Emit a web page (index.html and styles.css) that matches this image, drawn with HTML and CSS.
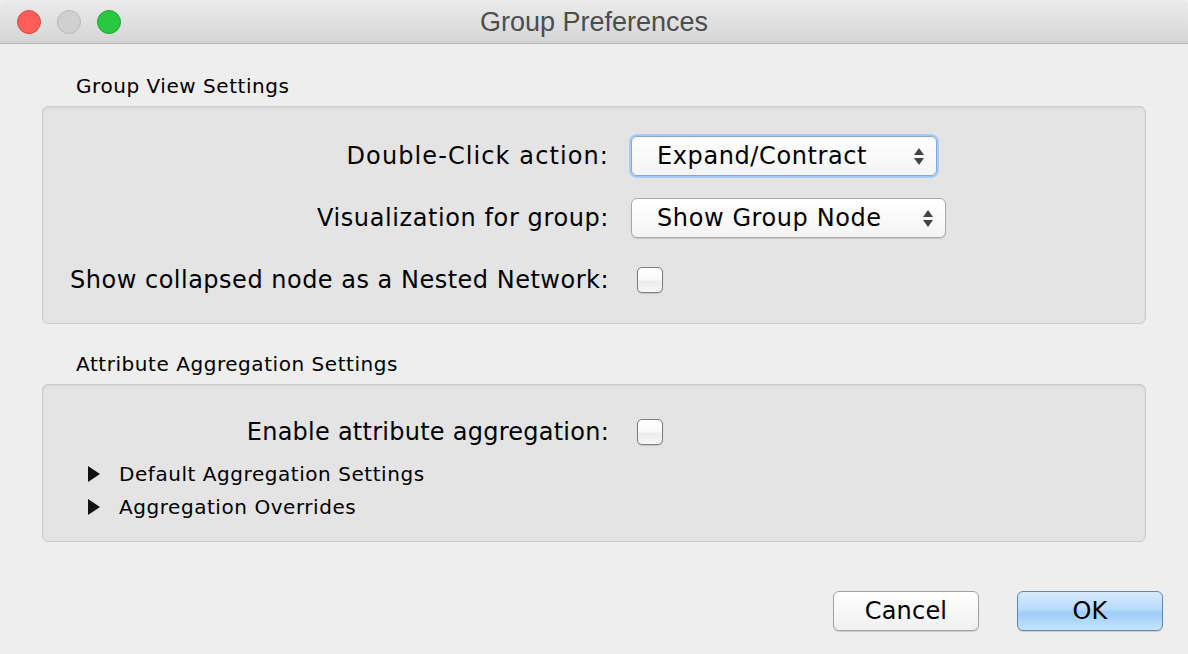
FILE: index.html
```html
<!DOCTYPE html>
<html>
<head>
<meta charset="utf-8">
<link rel="stylesheet" href="styles.css">
</head>
<body>
<div class="window">
  <div class="titlebar">
    <div class="lights">
      <span class="light red"></span>
      <span class="light grey"></span>
      <span class="light green"></span>
    </div>
    <div class="title">Group Preferences</div>
  </div>
  <div class="content">
    <div class="section-title first">Group View Settings</div>
    <div class="panel panel-view">
      <div class="form-grid">
        <div class="label wide">Double-Click action:</div>
        <div class="control">
          <div class="combo focused combo-a"><span>Expand/Contract</span><span class="arrows"><i class="up"></i><i class="down"></i></span></div>
        </div>
        <div class="label">Visualization for group:</div>
        <div class="control">
          <div class="combo combo-b"><span>Show Group Node</span><span class="arrows"><i class="up"></i><i class="down"></i></span></div>
        </div>
        <div class="label short snug">Show collapsed node as a Nested Network:</div>
        <div class="control short"><div class="check"></div></div>
      </div>
    </div>
    <div class="section-title">Attribute Aggregation Settings</div>
    <div class="panel panel-attr">
      <div class="form-grid">
        <div class="label tight">Enable attribute aggregation:</div>
        <div class="control"><div class="check"></div></div>
      </div>
      <div class="tree">
        <div class="tree-row"><span class="tri"></span><span>Default Aggregation Settings</span></div>
        <div class="tree-row"><span class="tri"></span><span>Aggregation Overrides</span></div>
      </div>
    </div>
    <div class="buttons">
      <div class="btn">Cancel</div>
      <div class="btn default">OK</div>
    </div>
  </div>
</div>
</body>
</html>
```
FILE: styles.css
```css
html, body {
  margin: 0;
  padding: 0;
  background: #eeeeee;
}
.window {
  width: 1188px;
  height: 654px;
  background: #eeeeee;
  font-family: "DejaVu Sans", "Open Sans", sans-serif;
  color: #000;
  overflow: hidden;
}
.titlebar {
  height: 43px;
  border-bottom: 1px solid #b3b3b3;
  background: linear-gradient(#ebebeb, #d5d5d5);
  display: flex;
  align-items: center;
  position: relative;
  border-radius: 8px 8px 0 0;
}
.lights {
  display: flex;
  gap: 16px;
  padding-left: 17px;
}
.light {
  width: 24px;
  height: 24px;
  border-radius: 50%;
  box-sizing: border-box;
}
.red { background: #fc5f57; border: 1px solid #df4840; }
.grey { background: #d0d0d0; border: 1px solid #bababa; }
.green { background: #28c840; border: 1px solid #1ea933; }
.title {
  position: absolute;
  left: 0;
  right: 0;
  top: 0;
  height: 43px;
  line-height: 44px;
  text-align: center;
  font-family: "Liberation Sans", Arial, sans-serif;
  font-size: 27px;
  color: #4d4d4d;
}
.content {
  padding: 0 42px 0 42px;
}
.section-title {
  font-size: 20px;
  letter-spacing: 0.55px;
  padding-left: 34px;
  height: 24px;
  line-height: 24px;
  margin-top: 28px;
  margin-bottom: 8px;
}
.section-title.first {
  margin-top: 30px;
}
.panel {
  background: #e4e4e4;
  border: 1px solid #cbcbcb;
  border-radius: 6px;
  box-shadow: inset 0 1px 2px rgba(0,0,0,0.08);
  box-sizing: border-box;
}
.panel-view {
  height: 218px;
  padding-top: 29px;
}
.panel-attr {
  height: 158px;
  padding-top: 27px;
}
.form-grid {
  display: grid;
  grid-template-columns: 566px auto;
  column-gap: 22px;
  row-gap: 22px;
  grid-auto-rows: 40px;
  align-items: center;
}
.form-grid .label.short, .form-grid .control.short { height: 36px; line-height: 36px; }
.label {
  text-align: right;
  font-size: 24px;
  letter-spacing: 0.6px;
  white-space: nowrap;
}
.label.wide { letter-spacing: 1.1px; }
.label.snug { letter-spacing: 0.5px; }
.label.tight { letter-spacing: 0.25px; }
.control {
  display: flex;
  align-items: center;
}
.combo {
  height: 40px;
  box-sizing: border-box;
  border: 1px solid #a9a9a9;
  border-radius: 6px;
  background: linear-gradient(#ffffff, #f4f4f4);
  box-shadow: 0 1px 1px rgba(0,0,0,0.12);
  display: flex;
  align-items: center;
  justify-content: space-between;
  padding: 0 12px 0 25px;
  font-size: 24px;
  letter-spacing: 0.6px;
}
.combo-a { width: 306px; }
.combo-b { width: 315px; }
.combo.focused {
  border-color: #7fa9e0;
  box-shadow: 0 0 0 2px #a8cbf5;
}
.arrows {
  display: flex;
  flex-direction: column;
  gap: 3px;
}
.arrows i {
  display: block;
  width: 0;
  height: 0;
  border-left: 5px solid transparent;
  border-right: 5px solid transparent;
}
.arrows .up { border-bottom: 7px solid #444; }
.arrows .down { border-top: 7px solid #444; }
.check {
  width: 26px;
  height: 26px;
  box-sizing: border-box;
  margin-left: 6px;
  border: 1px solid #7d7d7d;
  border-radius: 5px;
  background: linear-gradient(#ffffff 0%, #f8f8f8 50%, #ececec 55%, #f6f6f6 100%);
  box-shadow: 0 1px 1px rgba(0,0,0,0.15);
}
.tree {
  padding-top: 5px;
}
.tree-row {
  height: 33px;
  display: flex;
  align-items: center;
  font-size: 20px;
  letter-spacing: 0.55px;
  padding-left: 45px;
}
.tri {
  width: 0;
  height: 0;
  border-top: 8px solid transparent;
  border-bottom: 8px solid transparent;
  border-left: 12px solid #111;
  margin-right: 19px;
}
.buttons {
  display: flex;
  justify-content: flex-end;
  gap: 38px;
  margin-top: 49px;
  margin-right: -17px;
}
.btn {
  width: 146px;
  height: 40px;
  box-sizing: border-box;
  border: 1px solid #a3a3a3;
  border-radius: 6px;
  background: linear-gradient(#ffffff, #f0f0f0);
  box-shadow: 0 1px 1px rgba(0,0,0,0.15);
  display: flex;
  align-items: center;
  justify-content: center;
  font-size: 24px;
  letter-spacing: 0.2px;
}
.btn.default {
  border-color: #6288b8;
  background: linear-gradient(#d6eafd 0%, #b9dcfb 45%, #9dcdf9 55%, #c6e4fd 100%);
}
```
